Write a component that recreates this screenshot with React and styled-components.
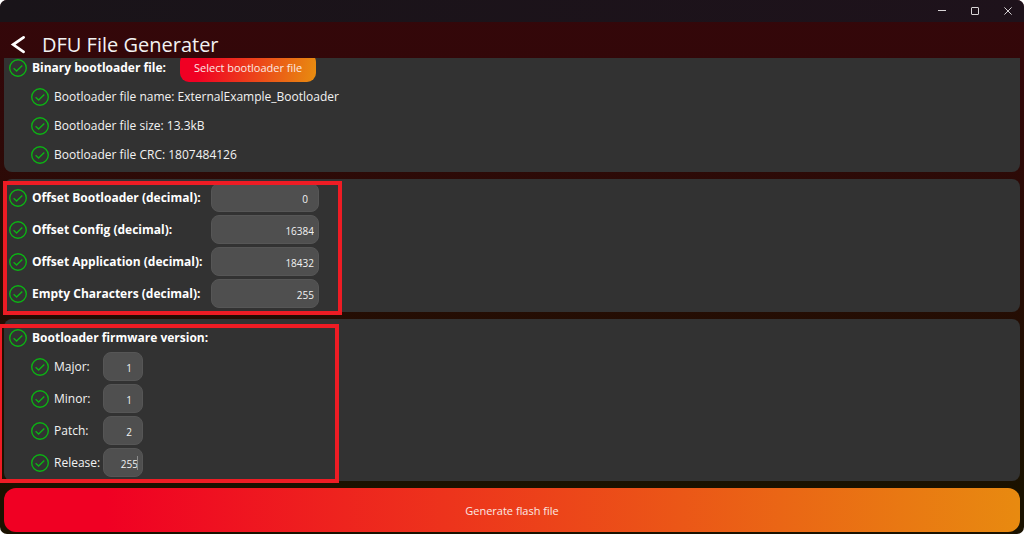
import React from "react";
import styled, { createGlobalStyle } from "styled-components";

const GlobalStyle = createGlobalStyle`
  * {
    box-sizing: border-box;
  }

  body {
    margin: 0;
    background: #fff;
    font-family: "Open Sans", "Noto Sans", sans-serif;
    color: #f2f2f2;
  }
`;

const Window = styled.div`
  display: flex;
  flex-direction: column;
  height: 100vh;
  overflow: hidden;
  border-radius: 7px;
  background: linear-gradient(180deg, #34070a 0%, #330709 12%, #1a1200 92%);
`;

const TitleBar = styled.div`
  display: flex;
  justify-content: flex-end;
  flex: none;
  height: 22px;
  background: linear-gradient(90deg, #191419, #1e121b);
`;

const WindowButton = styled.button`
  display: flex;
  align-items: center;
  justify-content: center;
  width: 33px;
  padding: 0;
  border: none;
  background: none;
  color: #d8d4d6;
`;

const Header = styled.header`
  display: flex;
  align-items: center;
  flex: none;
  gap: 16px;
  height: 36px;
  padding: 9px 10px 0;
`;

const BackButton = styled.button`
  display: flex;
  padding: 0;
  border: none;
  background: none;
  color: #fff;
`;

const Title = styled.h1`
  margin: 0;
  font-size: 20px;
  line-height: 28px;
  font-weight: 400;
`;

/* Scrolled to the end, so the first panel runs under the header */
const Content = styled.main`
  display: flex;
  flex-direction: column;
  justify-content: flex-end;
  flex: 1;
  gap: 7px;
  min-height: 0;
  padding: 0 4px 7px;
  overflow: hidden;
`;

const Panel = styled.section`
  position: relative;
  display: flex;
  flex-direction: column;
  flex: none;
  gap: ${({ $gap }) => $gap || 0}px;
  padding: 4px 5px;
  border-radius: 8px;
  background: #323232;
`;

const FilePanel = styled(Panel)`
  padding-bottom: 3px;
`;

const SubList = styled.div`
  display: flex;
  flex-direction: column;
  gap: ${({ $gap }) => $gap || 0}px;
  padding-left: 22px;
`;

const Row = styled.div`
  display: flex;
  align-items: center;
  height: 29px;
  font-size: 12px;
  line-height: 20px;
  white-space: nowrap;
`;

const Check = styled.svg`
  flex: none;
  width: 18px;
  height: 18px;
  margin-right: 5px;
`;

const Heading = styled.h2`
  width: ${({ $width }) => ($width ? `${$width}px` : "auto")};
  margin: 0;
  padding-top: 1px;
  font-size: 12px;
  font-weight: 700;
  color: #fff;
`;

const Label = styled.label`
  flex: none;
  width: ${({ $width }) => $width}px;
  padding-top: 1px;
  font-weight: ${({ $bold }) => ($bold ? 700 : 400)};
  color: ${({ $bold }) => ($bold ? "#fff" : "inherit")};
`;

const Field = styled.div`
  position: relative;
  display: flex;
`;

const Input = styled.input`
  width: ${({ $width }) => $width}px;
  height: 29px;
  padding: 2px ${({ $inset }) => $inset}px 0 4px;
  border: 1px solid #565656;
  border-radius: 8px;
  outline: none;
  background: #4f4f4f;
  color: #f2f2f2;
  font-family: inherit;
  font-size: 10px;
  text-align: right;
`;

const Caret = styled.span`
  position: absolute;
  top: 8px;
  right: 5px;
  width: 1px;
  height: 14px;
  background: #8a8a8a;
`;

const SelectButton = styled.button`
  height: 29px;
  padding: 0 14px;
  border: none;
  border-radius: 9px;
  background: linear-gradient(100deg, #f00023 15%, #e88a10 98%);
  color: #fbe9e4;
  font-family: inherit;
  font-size: 11px;
`;

const GenerateButton = styled.button`
  flex: none;
  height: 44px;
  margin: 0 4px 2px;
  border: none;
  border-radius: 12px;
  background: linear-gradient(90deg, #f00023 10%, #e88a10 100%);
  color: #fbe9e4;
  font-family: inherit;
  font-size: 11px;
`;

const Highlight = styled.div`
  position: absolute;
  top: ${({ $top }) => $top}px;
  left: ${({ $left }) => $left}px;
  bottom: ${({ $bottom }) => $bottom}px;
  width: ${({ $width }) => $width}px;
  border: 4px solid #ee1c24;
  pointer-events: none;
`;

const FileInfo = styled.span`
  padding-top: 1px;
`;

const fileInfo = [
  "Bootloader file name: ExternalExample_Bootloader",
  "Bootloader file size: 13.3kB",
  "Bootloader file CRC: 1807484126",
];

const offsets = [
  { id: "offset-bootloader", label: "Offset Bootloader (decimal):", value: "0" },
  { id: "offset-config", label: "Offset Config (decimal):", value: "16384" },
  { id: "offset-application", label: "Offset Application (decimal):", value: "18432" },
  { id: "empty-characters", label: "Empty Characters (decimal):", value: "255" },
];

const versions = [
  { id: "major", label: "Major:", value: "1" },
  { id: "minor", label: "Minor:", value: "1" },
  { id: "patch", label: "Patch:", value: "2" },
  { id: "release", label: "Release:", value: "255", focused: true },
];

function CheckIcon() {
  return (
    <Check viewBox="0 0 18 18" fill="none" stroke="#0cb214" aria-hidden="true">
      <circle cx="9" cy="9" r="8.3" strokeWidth="1.4" />
      <path d="M4.6 9.3 L7.6 12.1 L13.3 6.4" strokeWidth="1.4" />
    </Check>
  );
}

function NumberRow({ field, bold, labelWidth, inputWidth }) {
  // single digits sit further from the edge
  const inset = field.value.length === 1 ? 10 : 4;

  return (
    <Row>
      <CheckIcon />
      <Label htmlFor={field.id} $width={labelWidth} $bold={bold}>
        {field.label}
      </Label>
      <Field>
        <Input
          id={field.id}
          type="text"
          inputMode="numeric"
          defaultValue={field.value}
          $width={inputWidth}
          $inset={inset}
        />
        {field.focused && <Caret />}
      </Field>
    </Row>
  );
}

function App() {
  return (
    <Window>
      <GlobalStyle />
      <TitleBar>
        <WindowButton aria-label="Minimize">
          <svg width="8" height="8" viewBox="0 0 8 8" stroke="currentColor">
            <path d="M0 3.5 H8" />
          </svg>
        </WindowButton>
        <WindowButton aria-label="Maximize">
          <svg width="8" height="8" viewBox="0 0 8 8" fill="none" stroke="currentColor">
            <rect x="0.5" y="0.5" width="7" height="7" rx="0.5" />
          </svg>
        </WindowButton>
        <WindowButton aria-label="Close">
          <svg width="8" height="8" viewBox="0 0 8 8" stroke="currentColor">
            <path d="M0.4 0.4 L7.6 7.6 M7.6 0.4 L0.4 7.6" />
          </svg>
        </WindowButton>
      </TitleBar>

      <Header>
        <BackButton aria-label="Back">
          <svg width="16" height="20" viewBox="0 0 16 20" fill="none" stroke="currentColor">
            <path d="M13.6 2.4 L3.2 9.6 L13.6 16.8" strokeWidth="2.8" strokeLinecap="round" />
          </svg>
        </BackButton>
        <Title>DFU File Generater</Title>
      </Header>

      <Content>
        <FilePanel>
          <Row>
            <CheckIcon />
            <Heading $width={148}>Binary bootloader file:</Heading>
            <SelectButton>Select bootloader file</SelectButton>
          </Row>
          <SubList>
            {fileInfo.map((text) => (
              <Row key={text}>
                <CheckIcon />
                <FileInfo>{text}</FileInfo>
              </Row>
            ))}
          </SubList>
        </FilePanel>

        <Panel $gap={3}>
          {offsets.map((field) => (
            <NumberRow key={field.id} field={field} bold labelWidth={179} inputWidth={108} />
          ))}
          <Highlight $top={2} $left={-1} $bottom={-3} $width={339} />
        </Panel>

        <Panel>
          <Row>
            <CheckIcon />
            <Heading>Bootloader firmware version:</Heading>
          </Row>
          <SubList $gap={3}>
            {versions.map((field) => (
              <NumberRow key={field.id} field={field} labelWidth={49} inputWidth={40} />
            ))}
          </SubList>
          <Highlight $top={5} $left={-6} $bottom={-2} $width={341} />
        </Panel>
      </Content>

      <GenerateButton>Generate flash file</GenerateButton>
    </Window>
  );
}

export default App;
